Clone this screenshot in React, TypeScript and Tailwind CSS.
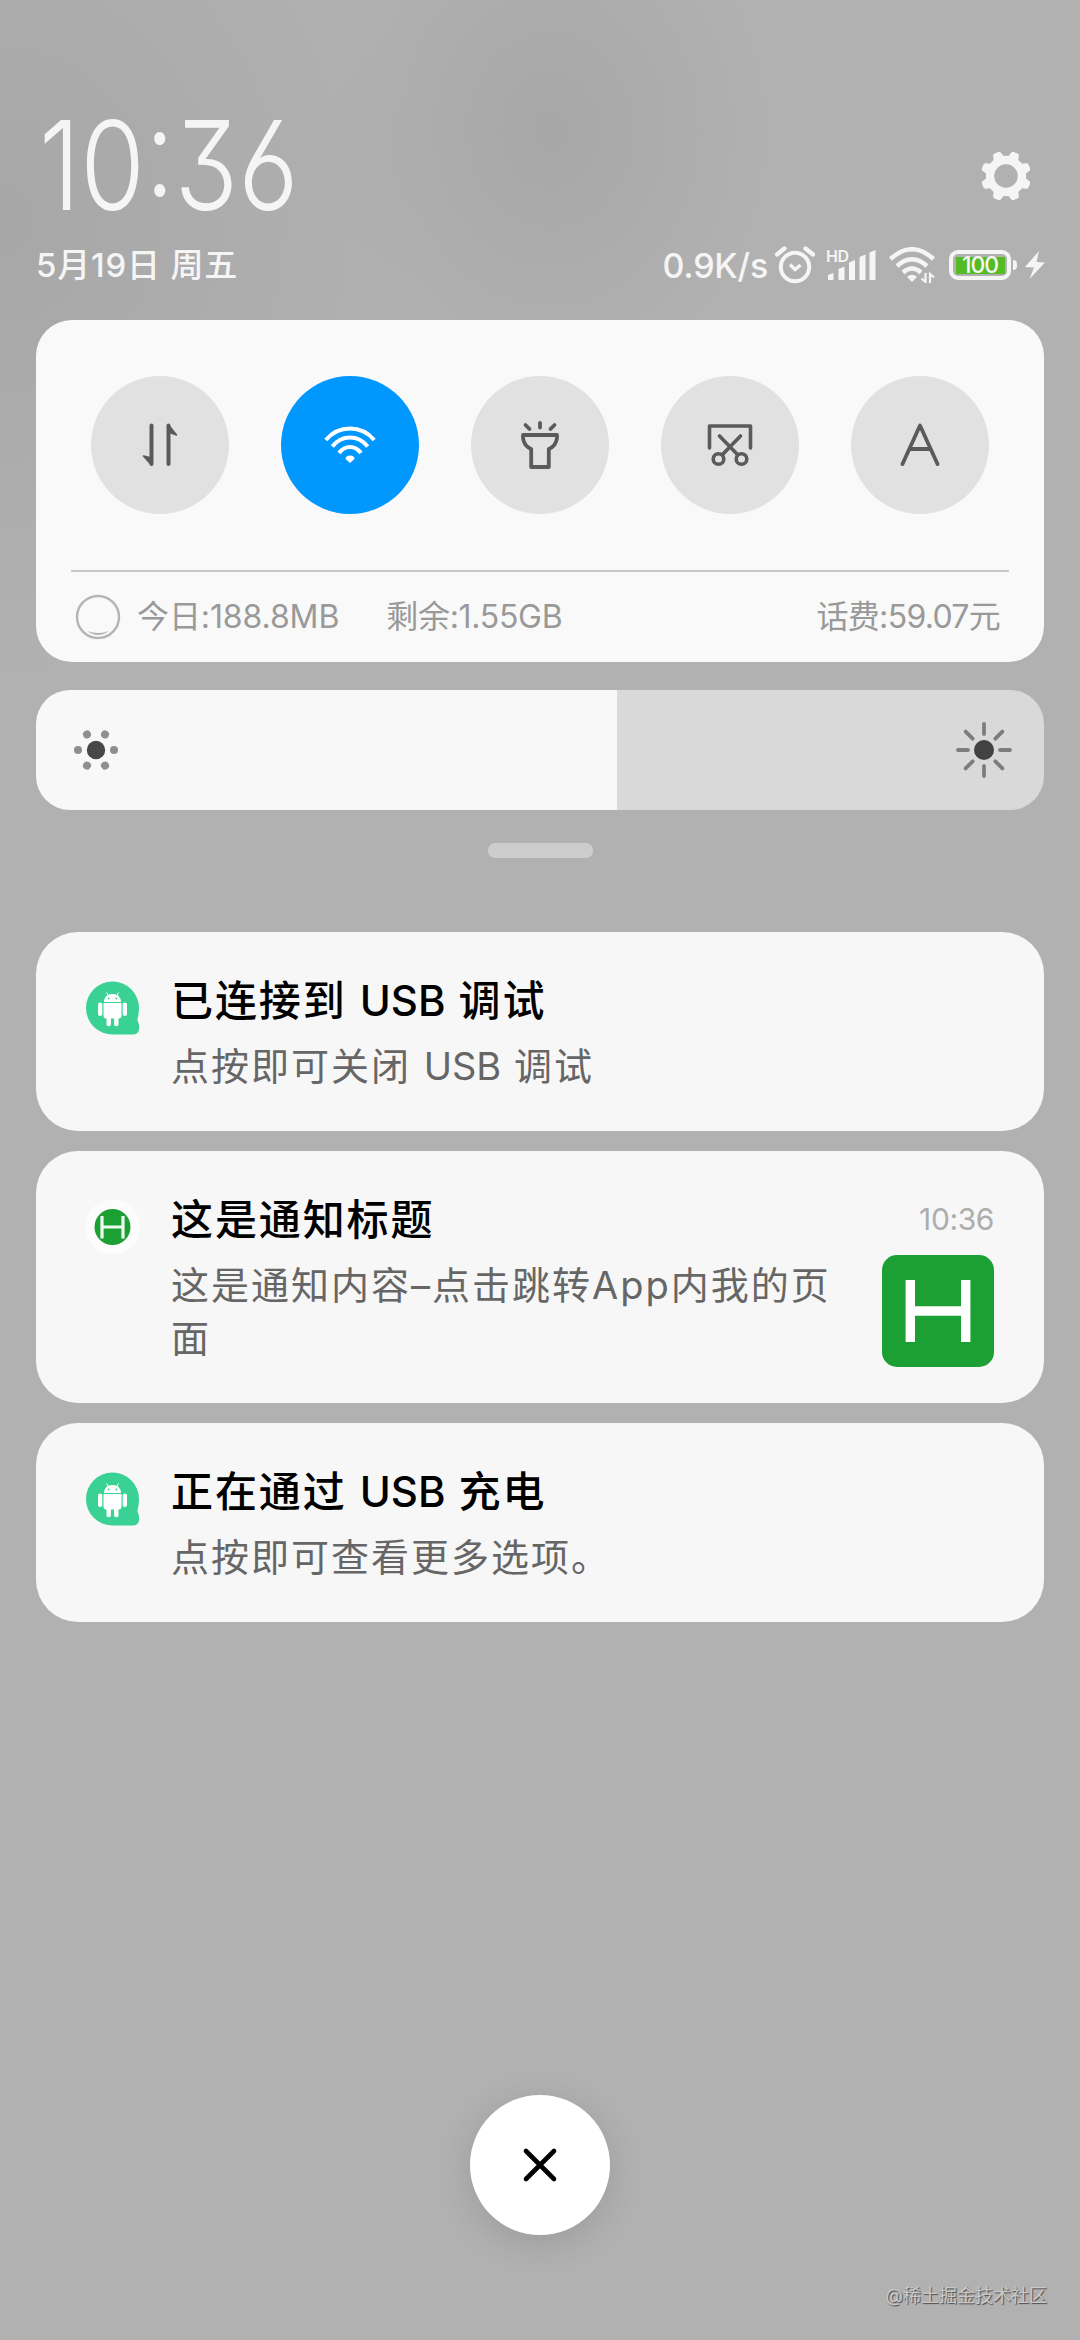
import React from "react";

type NotificationData = {
	id: number;
	title: string;
	text: string;
	icon: "android" | "app";
	time?: string;
};

const notifications: NotificationData[] = [
	{ id: 1, title: "已连接到 USB 调试", text: "点按即可关闭 USB 调试", icon: "android" },
	{
		id: 2,
		title: "这是通知标题",
		text: "这是通知内容–点击跳转App内我的页面",
		icon: "app",
		time: "10:36",
	},
	{ id: 3, title: "正在通过 USB 充电", text: "点按即可查看更多选项。", icon: "android" },
];

const GearIcon = () => (
	<svg width="50" height="50" viewBox="-25 -25 50 50">
		<circle r="16" fill="none" stroke="#f5f5f5" strokeWidth="8.4" />
		{[22.5, 67.5, 112.5, 157.5, 202.5, 247.5, 292.5, 337.5].map((deg) => (
			<path
				key={deg}
				d="M-6 -17 L-4.2 -23.4 Q-3.6 -25.2 -2 -25.2 H2 Q3.6 -25.2 4.2 -23.4 L6 -17Z"
				fill="#f5f5f5"
				transform={`rotate(${deg})`}
			/>
		))}
	</svg>
);

const AlarmIcon = () => (
	<svg width="40" height="38" viewBox="0 0 40 38" fill="none" stroke="#f5f5f5">
		<circle cx="20" cy="21" r="14.2" strokeWidth="4" />
		<path d="M2 8.5 L9.5 2.5 M38 8.5 L30.5 2.5" strokeWidth="4.4" strokeLinecap="round" />
		<path d="M15 18.5 L20 23.5 L25.5 19" strokeWidth="3.4" />
	</svg>
);

const SignalIcon = () => (
	<div className="relative h-[32px] w-[50px]">
		<span className="absolute top-0 left-0 text-[16px] leading-[14px] font-semibold tracking-[-0.5px]">
			HD
		</span>
		<svg width="50" height="32" viewBox="0 0 50 32" fill="#f5f5f5">
			<path d="M2 31 V26 L7.5 24 V31Z" />
			<path d="M12.5 31 V20 L18.5 17.5 V31Z" />
			<path d="M23 31 V13.5 L29 11 V31Z" />
			<path d="M33.5 31 V8 L39.5 5.5 V31Z" />
			<path d="M43.5 31 V3.5 L49.5 1 V31Z" />
		</svg>
	</div>
);

const StatusWifiIcon = () => (
	<svg width="46" height="36" viewBox="0 0 46 36" fill="none" stroke="#f5f5f5">
		<path d="M1.5 12 Q23 -7.5 44.5 12" strokeWidth="4.4" />
		<path d="M8 19 Q23 5.5 38 19" strokeWidth="4.4" />
		<path d="M14 25.5 Q23 17.5 32 25.5" strokeWidth="4.4" />
		<path d="M18 30 Q23 25.5 28 30 L23 35Z" fill="#f5f5f5" stroke="none" />
		<path d="M36.5 26 V35 L32.5 31.5 M41 36 V27 L45 30.5" strokeWidth="2.2" />
	</svg>
);

const Battery = () => (
	<div className="flex items-center gap-[2px]">
		<div className="flex h-[30px] w-[62px] items-center justify-center rounded-[9px] border-4 border-[#f5f5f5]">
			<div className="flex h-[17px] w-[49px] items-center justify-center bg-[#55bb22] text-[23px] leading-none font-medium tracking-[-1px]">
				100
			</div>
		</div>
		<div className="h-[10px] w-1 rounded-r-sm bg-[#f5f5f5]" />
	</div>
);

const BoltIcon = () => (
	<svg width="20" height="28" viewBox="0 0 20 28" fill="#f5f5f5">
		<path d="M14 0 L0 16 L9 16.5 L4.5 28 L20 11.5 L11.5 11Z" />
	</svg>
);

const DataIcon = () => (
	<svg width="36" height="44" viewBox="0 0 36 44" fill="none" stroke="#5a5a5a" strokeWidth="4" strokeLinecap="round">
		<path d="M9.5 2.5 V41 M26.5 41 V2.5" />
		<path d="M9.5 35 V42 L1.5 33Z M26.5 9 V2 L34.5 12Z" fill="#5a5a5a" strokeWidth="1.6" strokeLinejoin="round" />
	</svg>
);

const WifiIcon = () => (
	<svg width="52" height="38" viewBox="0 0 52 38" fill="none" stroke="#ffffff" strokeWidth="4">
		<path d="M1.8 14 Q11.5 2.5 26 2.5 Q40.5 2.5 50.2 14" />
		<path d="M8.3 20.5 Q15.5 11.5 26 11.5 Q36.5 11.5 43.7 20.5" />
		<path d="M15 27 Q19.5 21 26 21 Q32.5 21 37 27" />
		<path d="M21.5 33 Q21.5 29.5 26 29.5 Q30.5 29.5 30.5 33 L26 37Z" fill="#ffffff" stroke="none" />
	</svg>
);

const TorchIcon = () => (
	<svg width="40" height="50" viewBox="0 0 40 50" fill="none" stroke="#5a5a5a" strokeWidth="3.8" strokeLinecap="round" strokeLinejoin="round">
		<path d="M3 15 H37 V18 Q36 26 28.8 29 V47 H11.2 V29 Q4 26 3 18Z" />
		<path d="M20 3 V7.5 M5.5 5 L9.5 9 M34.5 5 L30.5 9" />
	</svg>
);

const ScreenshotIcon = () => (
	<svg width="46" height="44" viewBox="0 0 46 44" fill="none" stroke="#5a5a5a" strokeWidth="3.6" strokeLinecap="round" strokeLinejoin="round">
		<path d="M2.5 25 V3 H43.5 V25" />
		<path d="M12.5 13 L30.5 31.5 M33.5 13 L15.5 31.5" />
		<circle cx="11.5" cy="36" r="5.3" />
		<circle cx="34.5" cy="36" r="5.3" />
	</svg>
);

const AutoIcon = () => (
	<svg width="40" height="44" viewBox="0 0 40 44" fill="none" stroke="#5a5a5a" strokeWidth="3.8" strokeLinecap="round" strokeLinejoin="round">
		<path d="M2.5 41 L20 2.5 L37.5 41 M9.5 26 H30.5" />
	</svg>
);

const LowBrightnessIcon = () => (
	<svg width="46" height="42" viewBox="-23 -21 46 42" fill="#8f8f8f">
		<circle r="9.2" fill="#484848" />
		{[0, 60, 120, 180, 240, 300].map((deg) => (
			<circle key={deg} cx="18" r="4" transform={`rotate(${deg})`} />
		))}
	</svg>
);

const HighBrightnessIcon = () => (
	<svg width="56" height="56" viewBox="-28 -28 56 56">
		<circle r="10" fill="#424242" />
		{[0, 45, 90, 135, 180, 225, 270, 315].map((deg) => (
			<path
				key={deg}
				d="M16 0 H26"
				stroke="#7d7d7d"
				strokeWidth="3.8"
				strokeLinecap="round"
				transform={`rotate(${deg})`}
			/>
		))}
	</svg>
);

const AndroidIcon = () => (
	<svg width="54" height="54" viewBox="0 0 54 54">
		<path
			d="M26.5 0.5 A26.5 26.5 0 0 1 53 27 Q53 33 51.5 38 Q51.3 40 52.5 42 Q53.3 44 53.2 47.5 Q52.8 53.5 46.5 53.5 H26.5 A26.5 26.5 0 0 1 26.5 0.5Z"
			fill="#3ad195"
		/>
		<g fill="#ffffff">
			<path d="M18 21 Q18.5 13 26.5 13 Q34.5 13 35 21Z" />
			<path d="M20.5 11.5 L22.5 15 M32.5 11.5 L30.5 15" stroke="#ffffff" strokeWidth="1" />
			<path d="M17.5 22 H35.5 V34.5 Q35.5 37.5 32.5 37.5 H20.5 Q17.5 37.5 17.5 34.5Z" />
			<rect x="12" y="21.5" width="4.3" height="13.5" rx="2.1" />
			<rect x="36.7" y="21.5" width="4.3" height="13.5" rx="2.1" />
			<rect x="20.5" y="33" width="4.4" height="12.3" rx="2.1" />
			<rect x="28.1" y="33" width="4.4" height="12.3" rx="2.1" />
		</g>
		<g fill="#3ad195">
			<circle cx="22.7" cy="17.5" r="0.9" />
			<circle cx="30.3" cy="17.5" r="0.9" />
		</g>
	</svg>
);

const AppBadgeIcon = () => (
	<svg width="54" height="54" viewBox="0 0 54 54">
		<rect width="54" height="54" rx="25" fill="#fcfcfc" />
		<circle cx="26.5" cy="27" r="18" fill="#1ca034" />
		<path d="M16 16 V38.5 M37 16 V38.5 M16 27 H37" stroke="#eefbf0" strokeWidth="3.2" />
	</svg>
);

const AppLogo = () => (
	<svg width="112" height="112" viewBox="0 0 112 112">
		<rect width="112" height="112" rx="15" fill="#1ca034" />
		<path d="M28.3 25 V87 M83.7 25 V87 M28 56 H84" stroke="#ffffff" strokeWidth="9.4" />
	</svg>
);

const toggles = [
	{ name: "data", icon: <DataIcon />, active: false },
	{ name: "wifi", icon: <WifiIcon />, active: true },
	{ name: "torch", icon: <TorchIcon />, active: false },
	{ name: "screenshot", icon: <ScreenshotIcon />, active: false },
	{ name: "auto", icon: <AutoIcon />, active: false },
];

const Header = () => (
	<header className="flex h-[320px] flex-col pt-[110px] pr-[35px] pl-9 text-[#f5f5f5]">
		<div className="flex h-[110px] items-center justify-between pr-[14px]">
			<div className="ml-[3px] origin-left scale-x-[0.845] text-[124px] leading-[110px] font-light [font-feature-settings:'cv09','cv03']">
				10:36
			</div>
			<div className="mt-[22px]">
				<GearIcon />
			</div>
		</div>
		<div className="mt-[25px] flex h-10 items-center justify-between">
			<div className="mt-[2px] text-[33px] font-medium tracking-[0.8px]">5月19日 周五</div>
			<div className="flex items-center">
				<span className="text-[34px] font-medium tracking-[-0.2px]">0.9K/s</span>
				<div className="ml-[7px]">
					<AlarmIcon />
				</div>
				<div className="ml-[11px]">
					<SignalIcon />
				</div>
				<div className="ml-[13px]">
					<StatusWifiIcon />
				</div>
				<div className="ml-[14px]">
					<Battery />
				</div>
				<div className="ml-2">
					<BoltIcon />
				</div>
			</div>
		</div>
	</header>
);

const QuickSettings = () => (
	<section className="h-[342px] rounded-[36px] bg-[#f9f9f9] px-[35px] pt-14">
		<div className="flex justify-between px-5">
			{toggles.map((toggle) => (
				<div
					key={toggle.name}
					className={`flex size-[138px] items-center justify-center rounded-full ${toggle.active ? "bg-[#0097ff]" : "bg-[#e1e1e1]"}`}
				>
					{toggle.icon}
				</div>
			))}
		</div>
		<div className="mt-14 h-[2px] bg-[#c8c8c8]" />
		<div className="mt-[23px] flex h-11 items-center pr-[9px] pl-1 text-[32px] text-[#999999]">
			<svg width="46" height="46" viewBox="0 0 46 46">
				<circle cx="23" cy="23" r="21" fill="none" stroke="#b4b4b4" strokeWidth="2.4" />
				<path d="M12 37 Q23 41 34 37 Q23 45 12 37Z" fill="#b4b4b4" />
			</svg>
			<span className="ml-4 tracking-[-0.1px]">今日:188.8MB</span>
			<span className="ml-[47px] tracking-[-0.3px]">剩余:1.55GB</span>
			<span className="ml-auto tracking-[-0.7px]">话费:59.07元</span>
		</div>
	</section>
);

const BrightnessBar = () => (
	<section className="mt-7 flex h-[120px] overflow-hidden rounded-[34px]">
		<div className="flex w-[581px] items-center bg-[#f8f8f8] pl-[37px]">
			<LowBrightnessIcon />
		</div>
		<div className="flex flex-1 items-center justify-end bg-[#d9d9d9] pr-8">
			<HighBrightnessIcon />
		</div>
	</section>
);

// Latin words sit tighter than the Chinese characters round them
const MixedText = ({ text }: { text: string }) => (
	<>
		{text.split(/(\bUSB\b)/).map((part, i) =>
			part === "USB" ? (
				<span key={i} className="tracking-normal">
					{part}
				</span>
			) : (
				part
			),
		)}
	</>
);

const NotificationCard = ({ data }: { data: NotificationData }) => (
	<article className="flex rounded-[42px] bg-[#f7f7f7] pt-[49px] pr-[50px] pb-[38px] pl-[50px]">
		<div className="w-[85px] shrink-0">
			{data.icon === "android" ? <AndroidIcon /> : <AppBadgeIcon />}
		</div>
		<div className="flex-1">
			<h2 className="-mt-2 text-[42px] leading-[56px] font-medium tracking-[1.9px] text-black">
				<MixedText text={data.title} />
			</h2>
			<p className="mt-[11px] max-w-[680px] text-[38px] leading-[53px] tracking-[2px] break-all text-[#666666]">
				<MixedText text={data.text} />
			</p>
		</div>
		{data.time && (
			<div className="flex h-[165px] flex-col items-end">
				<span className="text-[30px] leading-[38px] tracking-[-0.4px] text-[#adadad]">
					{data.time}
				</span>
				<div className="mt-[17px]">
					<AppLogo />
				</div>
			</div>
		)}
	</article>
);

const App = () => {
	return (
		<div className="flex h-[2340px] w-[1080px] flex-col overflow-hidden bg-[#b1b1b1] bg-[radial-gradient(ellipse_220px_260px_at_550px_130px,#a7a7a7_0%,rgba(167,167,167,0.5)_50%,transparent_100%),radial-gradient(ellipse_420px_460px_at_0px_220px,#a7a7a7_0%,transparent_100%)] font-[Inter,'Noto_Sans_CJK_SC',sans-serif]">
			<Header />
			<main className="px-9">
				<QuickSettings />
				<BrightnessBar />
				<div className="mx-auto mt-[33px] h-[15px] w-[105px] rounded-[7px] bg-[#cdcdcd]" />
				<div className="mt-[74px] flex flex-col gap-5">
					{notifications.map((data) => (
						<NotificationCard key={data.id} data={data} />
					))}
				</div>
			</main>
			<footer className="mt-auto flex flex-col items-center">
				<button className="flex size-[140px] items-center justify-center rounded-full bg-white shadow-[0_8px_36px_rgba(0,0,0,0.12)]">
					<svg width="36" height="36" viewBox="0 0 36 36" stroke="#000000" strokeWidth="4.6" strokeLinecap="round">
						<path d="M4 4 L32 32 M32 4 L4 32" />
					</svg>
				</button>
				<p className="mt-[46px] mr-[33px] mb-[29px] self-end text-[18px] leading-[30px] text-[#c9c9c9] [text-shadow:1px_1px_1px_#4a4a4a]">
					@稀土掘金技术社区
				</p>
			</footer>
		</div>
	);
};

export default App;
